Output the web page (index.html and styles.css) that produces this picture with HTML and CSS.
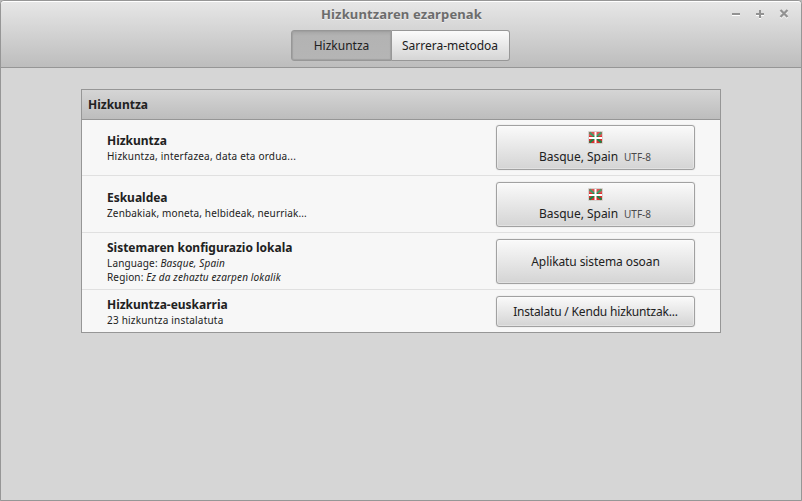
FILE: index.html
```html
<!DOCTYPE html>
<html lang="eu">
<head>
<meta charset="utf-8">
<title>Hizkuntzaren ezarpenak</title>
<link rel="stylesheet" href="styles.css">
</head>
<body>
<svg class="defs" width="0" height="0" aria-hidden="true">
  <symbol id="flag" viewBox="0 0 15 13">
    <rect width="15" height="13" rx="1" fill="#d5d1cf"/>
    <rect x="1" y="1" width="13" height="11" fill="#d7302f"/>
    <path d="M1.5 1.5L13.5 11.5M13.5 1.5L1.5 11.5" stroke="#168747" stroke-width="2"/>
    <path d="M1 1H14V5H1Z" fill="#fff" opacity=".18"/>
    <path d="M6.5 1H8.5V12H6.5ZM1 6H14V8H1Z" fill="#fff"/>
  </symbol>
</svg>
<div class="window">
  <header class="titlebar">
    <h1 class="title">Hizkuntzaren ezarpenak</h1>
    <div class="controls">
      <svg width="10" height="12" viewBox="0 0 10 12"><path d="M1 8.5H9" stroke="#fff"/><path d="M1 7H9" stroke="#929292" stroke-width="2"/></svg>
      <svg width="10" height="12" viewBox="0 0 10 12"><path d="M1 8H9M5 4V12" stroke="#fff" stroke-width="2"/><path d="M1 7H9M5 3V11" stroke="#929292" stroke-width="2"/></svg>
      <svg width="10" height="12" viewBox="0 0 10 12"><path d="M1.5 4L8.5 11M8.5 4L1.5 11" stroke="#fff" stroke-width="2"/><path d="M1.5 3L8.5 10M8.5 3L1.5 10" stroke="#929292" stroke-width="2.3"/></svg>
    </div>
    <nav class="tabs">
      <button class="tab active">Hizkuntza</button><button class="tab">Sarrera-metodoa</button>
    </nav>
  </header>
  <main class="panel">
    <h2 class="panel-title">Hizkuntza</h2>
    <section class="row first">
      <div class="info"><h3>Hizkuntza</h3><p class="wide">Hizkuntza, interfazea, data eta ordua...</p></div>
      <button class="button locale"><svg width="15" height="13"><use href="#flag"/></svg><span class="label">Basque, Spain<small>UTF-8</small></span></button>
    </section>
    <section class="row">
      <div class="info lower"><h3>Eskualdea</h3><p>Zenbakiak, moneta, helbideak, neurriak...</p></div>
      <button class="button locale"><svg width="15" height="13"><use href="#flag"/></svg><span class="label">Basque, Spain<small>UTF-8</small></span></button>
    </section>
    <section class="row">
      <div class="info lower"><h3>Sistemaren konfigurazio lokala</h3><p>Language: <i>Basque, Spain</i></p><p>Region: <i>Ez da zehaztu ezarpen lokalik</i></p></div>
      <button class="button plain">Aplikatu sistema osoan</button>
    </section>
    <section class="row last">
      <div class="info lower"><h3>Hizkuntza-euskarria</h3><p class="wide">23 hizkuntza instalatuta</p></div>
      <button class="button plain short">Instalatu / Kendu hizkuntzak...</button>
    </section>
  </main>
</div>
</body>
</html>
```
FILE: styles.css
```css
* { box-sizing: border-box; }
body { margin: 0; background: #b8b8b8; color: #212121; font: 12px/16px "Noto Sans", sans-serif; }
h1, h2, h3, p { margin: 0; font-size: inherit; }
button { font: inherit; color: inherit; margin: 0; padding: 0; }
.defs { display: block; }
.window { width: 802px; height: 501px; overflow: hidden; border: 1px solid #969696; border-radius: 4px 4px 0 0; background: #d6d6d6; }
.titlebar { display: grid; grid-template-columns: 1fr auto 1fr; grid-template-rows: 29px 31px; height: 67px; border-bottom: 1px solid #969696; border-radius: 3px 3px 0 0; background: linear-gradient(#e7e7e7, #bdbdbd); box-shadow: inset 0 1px #fff; }
.title { grid-column: 2; padding: 5px 0 0 1px; font-size: 13px; letter-spacing: .13px; color: #6c6c6c; text-shadow: 0 1px #eee; white-space: nowrap; }
.controls { grid-column: 3; display: flex; justify-content: flex-end; gap: 14px; padding: 6px 12px 0 0; }
.tabs { grid-column: 1 / -1; display: flex; justify-content: center; padding-right: 1px; }
.tab { height: 31px; width: 118px; padding-right: 1px; border: 1px solid #979797; border-left: 0; border-radius: 0 3px 3px 0; background: linear-gradient(#fbfbfb, #d5d5d5); }
.tab.active { width: 101px; padding: 0; border-left: 1px solid #979797; border-radius: 3px 0 0 3px; background: linear-gradient(#a6a6a6, #b3b3b3 5px, #b5b5b5); box-shadow: inset 0 0 1px 1px #a0a0a0; }
.panel { width: 640px; margin: 21px auto 0; border: 1px solid #969696; background: #f7f7f7; }
.panel-title { height: 30px; padding: 7px 6px; border-bottom: 1px solid #969696; background: linear-gradient(#d5d5d5, #bdbdbd); }
.row { display: flex; justify-content: space-between; align-items: center; height: 57px; padding: 1px 25px 0; border-bottom: 1px solid #e0e0e0; }
.row.first { height: 56px; padding-top: 0; }
.row.last { height: 42px; border: 0; }
.info.lower { padding-top: 1px; }
.info h3 { letter-spacing: -.02px; }
.info p { font-size: 10px; line-height: 14px; letter-spacing: .14px; }
.info p.wide { letter-spacing: .2px; }
.button { display: flex; flex-direction: column; align-items: center; justify-content: center; width: 199px; height: 45px; border: 1px solid #a1a1a1; border-radius: 3px; background: linear-gradient(#fafafa, #d4d4d4); box-shadow: inset 0 0 0 1px #ffffff50, 0 0 1px #bbb; }
.button.plain { padding-top: 1px; letter-spacing: -.09px; }
.button.short { height: 31px; letter-spacing: -.18px; }
.button.locale { justify-content: flex-start; gap: 5px; padding-top: 5px; }
.label { display: flex; align-items: baseline; gap: 6px; margin-right: 1px; letter-spacing: -.03px; }
.label small { font-size: 10px; color: #4a4a4a; }
```
